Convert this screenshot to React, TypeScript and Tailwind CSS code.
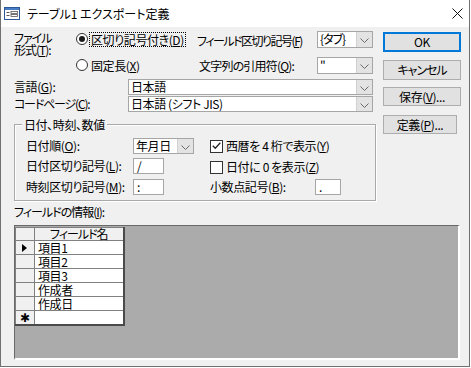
import React from 'react';

// mnemonic letter, underlined like a Windows accelerator key
const K: React.FC<{ c: string }> = ({ c }) => <span className="underline underline-offset-[1px]">{c}</span>;

const Chevron: React.FC = () => (
  <svg width="9" height="5" viewBox="0 0 9 5" className="mt-[3px]">
    <polyline points="0.5,0.5 4.5,4.5 8.5,0.5" fill="none" stroke="#6a6a6a" strokeWidth="1" />
  </svg>
);

const Combo: React.FC<{ className: string; text?: string }> = ({ className, text }) => (
  <div className={`flex border border-[#a6a6a6] bg-white ${className}`}>
    <div className="flex-1 pl-[2px] leading-[13px] whitespace-nowrap">{text}</div>
    <div className="w-[16px] bg-[#e3e3e3] border-l border-[#d0d0d0] flex items-center justify-center">
      <Chevron />
    </div>
  </div>
);

const TextBox: React.FC<{ className: string; text: string }> = ({ className, text }) => (
  <div className={`border border-[#a6a6a6] bg-white pl-[3px] leading-[13px] ${className}`}>{text}</div>
);

const Radio: React.FC<{ on?: boolean }> = ({ on }) => (
  <div className="w-[12px] h-[12px] rounded-full border border-[#333] bg-white flex items-center justify-center shrink-0">
    {on && <div className="w-[6px] h-[6px] rounded-full bg-[#1a1a1a]" />}
  </div>
);

const Check: React.FC<{ on?: boolean }> = ({ on }) => (
  <div className="w-[13px] h-[13px] border border-[#333] bg-white flex items-center justify-center shrink-0">
    {on && (
      <svg width="9" height="8" viewBox="0 0 9 8">
        <polyline points="0.8,3.8 3.3,6.3 8.3,0.8" fill="none" stroke="#222" strokeWidth="1.3" />
      </svg>
    )}
  </div>
);

const Btn: React.FC<{ className: string; children: React.ReactNode }> = ({ className, children }) => (
  <div className={`flex items-center justify-center bg-[#e1e1e1] ${className}`}>{children}</div>
);

const rows = ['項目1', '項目2', '項目3', '作成者', '作成日'];

export default function App() {
  return (
    <div className="w-[471px] h-[368px] bg-white font-['Noto_Sans_CJK_JP','Noto_Sans',sans-serif] text-[12px] text-black tracking-[-0.4px] [font-feature-settings:'palt']">
      <div className="w-[470px] h-[367px] bg-[#f0f0f0] border-l border-r border-b border-[#707070] flex flex-col">
        {/* title bar */}
        <div className="h-[27px] bg-white flex items-center shrink-0">
          <svg width="16" height="13" viewBox="0 0 16 13" className="ml-[3px]">
            <rect x="0.5" y="0.5" width="15" height="12" fill="#fff" stroke="#2b5797" />
            <rect x="1" y="1" width="14" height="2" fill="#4a7cc4" />
            <rect x="2.5" y="5" width="3" height="1" fill="#555" />
            <rect x="2.5" y="8" width="3" height="1" fill="#555" />
            <rect x="7" y="4.5" width="6.5" height="2" fill="none" stroke="#555" strokeWidth="0.8" />
            <rect x="7" y="7.5" width="6.5" height="2" fill="none" stroke="#555" strokeWidth="0.8" />
          </svg>
          <span className="ml-[7px] text-[12px] leading-[12px] tracking-normal">テーブル1 エクスポート定義</span>
          <svg width="11" height="11" viewBox="0 0 11 11" className="ml-auto mr-[6px]">
            <path d="M0.5 0.5 L10.5 10.5 M10.5 0.5 L0.5 10.5" stroke="#111" strokeWidth="1" />
          </svg>
        </div>

        <div className="pl-[13px] pt-[3px] flex flex-col">
          <div className="flex">
            {/* left column */}
            <div className="w-[362px] flex flex-col">
              <div className="flex">
                <div className="w-[62px] pt-[2px] leading-[12px] tracking-[-1px]">
                  <div>ファイル</div>
                  <div>形式(<K c="T" />):</div>
                </div>
                <div className="flex flex-col">
                  <div className="flex items-center h-[18px]">
                    <div className="w-[121px] flex items-center">
                      <Radio on />
                      <div className="ml-[1px] px-[1px] border border-dotted border-black leading-[13px] whitespace-nowrap">区切り記号付き(<K c="D" />)</div>
                    </div>
                    <div className="w-[120px] leading-[12px] whitespace-nowrap pt-[3px] tracking-[-1.5px]">フィールド区切り記号(<K c="F" />)</div>
                    <Combo className="w-[56px] h-[17px] tracking-[-1px]" text="{タブ}" />
                  </div>
                  <div className="flex items-center h-[18px] mt-[8px]">
                    <div className="w-[121px] flex items-center">
                      <Radio />
                      <div className="ml-[2px] pl-[1px] leading-[13px] whitespace-nowrap">固定長(<K c="X" />)</div>
                    </div>
                    <div className="w-[120px] pl-[2px] leading-[12px] whitespace-nowrap pt-[2px] tracking-[-0.8px]">文字列の引用符(<K c="Q" />):</div>
                    <Combo className="w-[56px] h-[17px]" text={'"'} />
                  </div>
                </div>
              </div>

              <div className="flex items-center h-[16px] mt-[5px]">
                <div className="w-[114px] leading-[12px]">言語(<K c="G" />):</div>
                <Combo className="w-[245px] h-[16px]" text="日本語" />
              </div>
              <div className="flex items-center h-[16px] mt-[1px]">
                <div className="w-[114px] leading-[12px] tracking-[-1.2px]">コードページ(<K c="C" />):</div>
                <Combo className="w-[245px] h-[16px]" text="日本語 (シフト JIS)" />
              </div>

              {/* date / time / number group */}
              <div className="relative mt-[12px] h-[77px] border border-[#a9a9a9] shadow-[inset_1px_1px_0_#fff,1px_1px_0_#fff] pl-[11px] pt-[13px]">
                <div className="absolute -top-[7px] left-[7px] px-[2px] bg-[#f0f0f0] leading-[13px]">日付、時刻、数値</div>
                <div className="flex items-center h-[16px]">
                  <div className="w-[107px] leading-[12px]">日付順(<K c="O" />):</div>
                  <Combo className="w-[61px] h-[16px]" text="年月日" />
                  <div className="ml-[16px] flex items-center">
                    <Check on />
                    <span className="ml-[3px] leading-[12px]">西暦を 4 桁で表示(<K c="Y" />)</span>
                  </div>
                </div>
                <div className="flex items-center h-[16px] mt-[4px]">
                  <div className="w-[107px] leading-[12px]">日付区切り記号(<K c="L" />):</div>
                  <TextBox className="w-[31px] h-[16px]" text="/" />
                  <div className="ml-[46px] flex items-center pt-[2px]">
                    <Check />
                    <span className="ml-[3px] leading-[12px]">日付に 0 を表示(<K c="Z" />)</span>
                  </div>
                </div>
                <div className="flex items-center h-[16px] mt-[5px]">
                  <div className="w-[107px] leading-[12px]">時刻区切り記号(<K c="M" />):</div>
                  <TextBox className="w-[31px] h-[16px]" text=":" />
                  <div className="ml-[46px] w-[105px] leading-[12px]">小数点記号(<K c="B" />):</div>
                  <TextBox className="w-[26px] h-[16px]" text="." />
                </div>
              </div>
            </div>

            {/* buttons */}
            <div className="ml-[7px] flex flex-col">
              <Btn className="w-[78px] h-[20px] mt-[2px] border-2 border-[#0078d7]">OK</Btn>
              <Btn className="w-[78px] h-[20px] mt-[8px] border border-[#adadad] tracking-[-1px]">キャンセル</Btn>
              <Btn className="w-[78px] h-[19px] mt-[7px] border border-[#adadad]">保存(<K c="V" />)...</Btn>
              <Btn className="w-[74px] h-[19px] mt-[9px] border border-[#adadad]">定義(<K c="P" />)...</Btn>
            </div>
          </div>

          <div className="mt-[5px] leading-[12px] tracking-[-1px]">フィールドの情報(<K c="I" />):</div>

          {/* field grid */}
          <div className="mt-[7px] w-[446px] h-[135px] bg-[#ababab] border-t border-l border-[#696969] border-r-2 border-b-2 border-r-white border-b-white pt-[1px]">
            <table className="border-collapse border-l border-t border-r-2 border-b-2 border-[#4a4a4a]">
              <thead>
                <tr className="h-[13px]">
                  <th className="w-[18px] p-0 bg-[#f0f0f0] border border-[#808080]" />
                  <th className="w-[89px] p-0 bg-[#f0f0f0] border border-[#808080] font-normal leading-[12px] text-center tracking-[-1px]">フィールド名</th>
                </tr>
              </thead>
              <tbody>
                {rows.map((r, i) => (
                  <tr key={r} className="h-[14px]">
                    <td className="p-0 bg-[#f0f0f0] border border-[#808080]">
                      {i === 0 && (
                        <svg width="18" height="12" viewBox="0 0 18 12">
                          <polygon points="6,2 11,6 6,10" fill="#000" />
                        </svg>
                      )}
                    </td>
                    <td className="p-0 pl-[3px] bg-white border border-[#808080] leading-[12px]">{r}</td>
                  </tr>
                ))}
                <tr className="h-[14px]">
                  <td className="p-0 bg-[#f0f0f0] border border-[#808080] text-center leading-[12px]">✱</td>
                  <td className="p-0 bg-white border border-[#808080]" />
                </tr>
              </tbody>
            </table>
          </div>
        </div>
      </div>
    </div>
  );
}
